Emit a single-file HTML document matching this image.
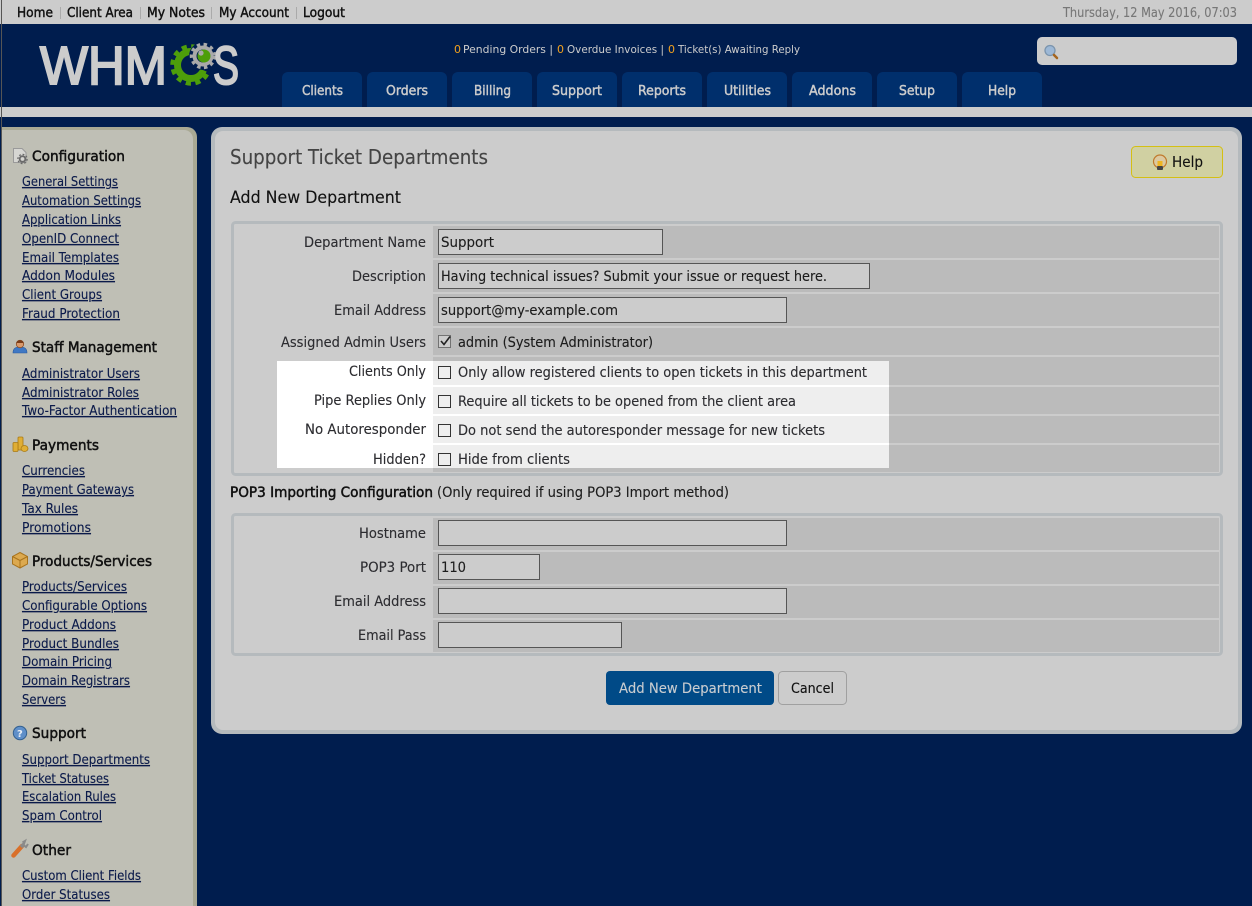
<!DOCTYPE html>
<html><head><meta charset="utf-8"><title>Support Ticket Departments</title>
<style>
html,body{margin:0;padding:0;background:#001d4e;overflow:hidden}
svg{display:block}
text{font-family:"DejaVu Sans","Liberation Sans",sans-serif;font-size:14px;fill:#2c2c30;stroke:#2c2c30;stroke-width:.12;white-space:pre}
.t{font-size:13.5px;fill:#111;stroke:#111;stroke-width:.45}
.tab{font-size:13px;fill:#ccc;stroke:#ccc;stroke-width:.45}
.st{font-size:11px;fill:#ccc;stroke:none}
.z{font-size:11px;fill:#f0a01e;stroke:none}
.h{font-size:14.5px;fill:#111;stroke:#111;stroke-width:.5}
.l{font-size:13px;fill:#0b1a4a;stroke:#0b1a4a;stroke-width:.12;text-decoration:underline}
.f{fill:#1c1c1c;stroke:#1c1c1c}
</style></head><body>
<svg width="1252" height="906" viewBox="0 0 1252 906" xmlns="http://www.w3.org/2000/svg">
<rect width="1252" height="906" fill="#001d4e"/>
<rect width="1252" height="24" fill="#ccc"/>
<rect y="107" width="1252" height="10" fill="#ccc"/>
<rect x="1" width="1" height="906" fill="#555"/>

<!-- top nav -->
<text class="t" x="17" y="17" textLength="36" lengthAdjust="spacingAndGlyphs">Home</text>
<text class="t" x="67" y="17" textLength="66" lengthAdjust="spacingAndGlyphs">Client Area</text>
<text class="t" x="147" y="17" textLength="58" lengthAdjust="spacingAndGlyphs">My Notes</text>
<text class="t" x="219" y="17" textLength="70" lengthAdjust="spacingAndGlyphs">My Account</text>
<text class="t" x="303" y="17" textLength="42" lengthAdjust="spacingAndGlyphs">Logout</text>
<g fill="#aaa"><rect x="60" y="7" width="1" height="12"/><rect x="140" y="7" width="1" height="12"/><rect x="211" y="7" width="1" height="12"/><rect x="296" y="7" width="1" height="12"/></g>
<text x="1063" y="17" textLength="174" lengthAdjust="spacingAndGlyphs" style="font-size:13px;fill:#777;stroke:#777">Thursday, 12 May 2016, 07:03</text>

<!-- logo -->
<text x="40" y="84" textLength="127" lengthAdjust="spacingAndGlyphs" style="font-family:'Liberation Sans',sans-serif;font-size:54px;fill:#ccc;stroke:#ccc;stroke-width:2">WHM</text>
<circle cx="191" cy="65" r="13.5" fill="none" stroke="#4d9e0a" stroke-width="7"/>
<circle cx="191" cy="65" r="18.5" fill="none" stroke="#4d9e0a" stroke-width="4.5" stroke-dasharray="5.2 4.5"/>
<path d="M191 65L222 58L222 78Z" fill="#001d4e"/>
<circle cx="203" cy="56" r="14" fill="#001d4e"/>
<circle cx="203" cy="56" r="8.5" fill="none" stroke="#a9a9a9" stroke-width="4"/>
<circle cx="203" cy="56" r="11.5" fill="none" stroke="#a9a9a9" stroke-width="3.5" stroke-dasharray="3.4 3.4"/>
<circle cx="204" cy="56" r="6.5" fill="#4d9e0a"/>
<circle cx="201" cy="53" r="2.6" fill="#a9a9a9"/>
<text x="213" y="84" textLength="26" lengthAdjust="spacingAndGlyphs" style="font-family:'Liberation Sans',sans-serif;font-size:54px;fill:#ccc;stroke:#ccc;stroke-width:2">S</text>

<!-- stats -->
<text class="z" x="454" y="53">0</text>
<text class="st" x="463" y="53" textLength="90" lengthAdjust="spacingAndGlyphs">Pending Orders |</text>
<text class="z" x="557" y="53">0</text>
<text class="st" x="567" y="53" textLength="97" lengthAdjust="spacingAndGlyphs">Overdue Invoices |</text>
<text class="z" x="668" y="53">0</text>
<text class="st" x="678" y="53" textLength="122" lengthAdjust="spacingAndGlyphs">Ticket(s) Awaiting Reply</text>

<!-- search -->
<rect x="1037" y="37" width="200" height="28" rx="5" fill="#ccc"/>
<circle cx="1050" cy="50.500" r="5" fill="#9db8d6" stroke="#7b94ad" stroke-width="1.300"/>
<path d="M1054 55L1057 58" stroke="#a5651f" stroke-width="2.500" stroke-linecap="round"/>

<!-- tabs -->
<g fill="#002f6c">
<path d="M282 107V78a6 6 0 0 1 6-6h68a6 6 0 0 1 6 6v29z"/>
<path d="M367 107V78a6 6 0 0 1 6-6h68a6 6 0 0 1 6 6v29z"/>
<path d="M452 107V78a6 6 0 0 1 6-6h68a6 6 0 0 1 6 6v29z"/>
<path d="M537 107V78a6 6 0 0 1 6-6h68a6 6 0 0 1 6 6v29z"/>
<path d="M622 107V78a6 6 0 0 1 6-6h68a6 6 0 0 1 6 6v29z"/>
<path d="M707 107V78a6 6 0 0 1 6-6h68a6 6 0 0 1 6 6v29z"/>
<path d="M792 107V78a6 6 0 0 1 6-6h68a6 6 0 0 1 6 6v29z"/>
<path d="M877 107V78a6 6 0 0 1 6-6h68a6 6 0 0 1 6 6v29z"/>
<path d="M962 107V78a6 6 0 0 1 6-6h68a6 6 0 0 1 6 6v29z"/>
</g>
<text class="tab" x="302" y="95" textLength="41" lengthAdjust="spacingAndGlyphs">Clients</text>
<text class="tab" x="386" y="95" textLength="42" lengthAdjust="spacingAndGlyphs">Orders</text>
<text class="tab" x="474" y="95" textLength="37" lengthAdjust="spacingAndGlyphs">Billing</text>
<text class="tab" x="552" y="95" textLength="50" lengthAdjust="spacingAndGlyphs">Support</text>
<text class="tab" x="638" y="95" textLength="48" lengthAdjust="spacingAndGlyphs">Reports</text>
<text class="tab" x="724" y="95" textLength="47" lengthAdjust="spacingAndGlyphs">Utilities</text>
<text class="tab" x="809" y="95" textLength="47" lengthAdjust="spacingAndGlyphs">Addons</text>
<text class="tab" x="899" y="95" textLength="36" lengthAdjust="spacingAndGlyphs">Setup</text>
<text class="tab" x="988" y="95" textLength="28" lengthAdjust="spacingAndGlyphs">Help</text>

<!-- sidebar -->
<path d="M2 906V127H187a10 10 0 0 1 10 10V906z" fill="#a9a994"/>
<path d="M2 906V130H184a9 9 0 0 1 9 9V906z" fill="#bfbfb5"/>

<text class="h" x="32" y="161" textLength="93" lengthAdjust="spacingAndGlyphs">Configuration</text>
<text class="h" x="32" y="352" textLength="125" lengthAdjust="spacingAndGlyphs">Staff Management</text>
<text class="h" x="32" y="450" textLength="67" lengthAdjust="spacingAndGlyphs">Payments</text>
<text class="h" x="32" y="566" textLength="120" lengthAdjust="spacingAndGlyphs">Products/Services</text>
<text class="h" x="32" y="738" textLength="54" lengthAdjust="spacingAndGlyphs">Support</text>
<text class="h" x="32" y="855" textLength="39" lengthAdjust="spacingAndGlyphs">Other</text>

<text class="l" x="22" y="186" textLength="96" lengthAdjust="spacingAndGlyphs">General Settings</text>
<text class="l" x="22" y="205" textLength="119" lengthAdjust="spacingAndGlyphs">Automation Settings</text>
<text class="l" x="22" y="224" textLength="99" lengthAdjust="spacingAndGlyphs">Application Links</text>
<text class="l" x="22" y="243" textLength="97" lengthAdjust="spacingAndGlyphs">OpenID Connect</text>
<text class="l" x="22" y="262" textLength="97" lengthAdjust="spacingAndGlyphs">Email Templates</text>
<text class="l" x="22" y="280" textLength="93" lengthAdjust="spacingAndGlyphs">Addon Modules</text>
<text class="l" x="22" y="299" textLength="80" lengthAdjust="spacingAndGlyphs">Client Groups</text>
<text class="l" x="22" y="318" textLength="98" lengthAdjust="spacingAndGlyphs">Fraud Protection</text>

<text class="l" x="22" y="378" textLength="118" lengthAdjust="spacingAndGlyphs">Administrator Users</text>
<text class="l" x="22" y="397" textLength="117" lengthAdjust="spacingAndGlyphs">Administrator Roles</text>
<text class="l" x="22" y="415" textLength="155" lengthAdjust="spacingAndGlyphs">Two-Factor Authentication</text>

<text class="l" x="22" y="475" textLength="63" lengthAdjust="spacingAndGlyphs">Currencies</text>
<text class="l" x="22" y="494" textLength="112" lengthAdjust="spacingAndGlyphs">Payment Gateways</text>
<text class="l" x="22" y="513" textLength="56" lengthAdjust="spacingAndGlyphs">Tax Rules</text>
<text class="l" x="22" y="532" textLength="69" lengthAdjust="spacingAndGlyphs">Promotions</text>

<text class="l" x="22" y="591" textLength="105" lengthAdjust="spacingAndGlyphs">Products/Services</text>
<text class="l" x="22" y="610" textLength="125" lengthAdjust="spacingAndGlyphs">Configurable Options</text>
<text class="l" x="22" y="629" textLength="94" lengthAdjust="spacingAndGlyphs">Product Addons</text>
<text class="l" x="22" y="648" textLength="97" lengthAdjust="spacingAndGlyphs">Product Bundles</text>
<text class="l" x="22" y="666" textLength="90" lengthAdjust="spacingAndGlyphs">Domain Pricing</text>
<text class="l" x="22" y="685" textLength="108" lengthAdjust="spacingAndGlyphs">Domain Registrars</text>
<text class="l" x="22" y="704" textLength="44" lengthAdjust="spacingAndGlyphs">Servers</text>

<text class="l" x="22" y="764" textLength="128" lengthAdjust="spacingAndGlyphs">Support Departments</text>
<text class="l" x="22" y="783" textLength="87" lengthAdjust="spacingAndGlyphs">Ticket Statuses</text>
<text class="l" x="22" y="801" textLength="94" lengthAdjust="spacingAndGlyphs">Escalation Rules</text>
<text class="l" x="22" y="820" textLength="80" lengthAdjust="spacingAndGlyphs">Spam Control</text>

<text class="l" x="22" y="880" textLength="119" lengthAdjust="spacingAndGlyphs">Custom Client Fields</text>
<text class="l" x="22" y="899" textLength="88" lengthAdjust="spacingAndGlyphs">Order Statuses</text>

<!-- sidebar icons -->
<path d="M13.500 148.500H22L26 152.500V162.500H13.500Z" fill="#d6d6d2" stroke="#9a9a9a"/>
<circle cx="22.500" cy="159" r="2.800" fill="none" stroke="#6a6a6a" stroke-width="1.800"/>
<circle cx="22.500" cy="159" r="4.600" fill="none" stroke="#6a6a6a" stroke-width="1.300" stroke-dasharray="1.800 1.800"/>

<path d="M13 353C13 348 16 347 20 347S27 348 27 353Z" fill="#3f78c4" stroke="#2a5a9e" stroke-width=".6"/>
<circle cx="20" cy="344" r="3.700" fill="#d99a6c" stroke="#8a4a22" stroke-width=".8"/>
<path d="M16.500 343C17 339.500 23 339.500 23.500 343Z" fill="#7a3c18"/>

<g fill="#e0ae35" stroke="#a87a14" stroke-width=".8">
<rect x="18" y="437" width="5" height="13" rx="1"/>
<rect x="13" y="442.500" width="5" height="9" rx="1"/>
<ellipse cx="24.500" cy="448.500" rx="3.500" ry="3"/>
</g>

<path d="M20 552.500L27.500 556.500V564L20 568L12.500 564V556.500Z" fill="#dca94f" stroke="#a9741e"/>
<path d="M12.500 556.500L20 560.500L27.500 556.500M20 560.500V568" fill="none" stroke="#a9741e"/>

<circle cx="20" cy="733" r="6.700" fill="#5f8fc9" stroke="#33608f" stroke-width="1"/>
<text x="17" y="737" style="font-size:10px;font-weight:bold;fill:#e8eef6;stroke:none">?</text>

<path d="M13.500 855.500L22 846" stroke="#d9702a" stroke-width="4.500" stroke-linecap="round"/>
<path d="M21 847L24 844" stroke="#8a8a8a" stroke-width="3.500"/>
<path d="M22.500 842.500L25 841L23.500 845L26 847L28 844" fill="none" stroke="#8a8a8a" stroke-width="2"/>

<!-- main panel -->
<rect x="211" y="127" width="1031" height="607" rx="11" fill="#b5babd"/>
<rect x="215" y="131" width="1023" height="599" rx="8" fill="#ccc"/>

<text x="230" y="164" textLength="258" lengthAdjust="spacingAndGlyphs" style="font-size:20px;fill:#444;stroke:#444">Support Ticket Departments</text>
<text x="230" y="203" textLength="171" lengthAdjust="spacingAndGlyphs" style="font-size:16.500px;fill:#111;stroke:#111">Add New Department</text>

<rect x="1131.500" y="146.500" width="91" height="31" rx="4" fill="#d0d0a2" stroke="#d4bf14"/>
<circle cx="1160" cy="161.500" r="6.500" fill="#dcc9a0" stroke="#c07a2c" stroke-width="1.200"/>
<rect x="1157.500" y="161" width="5" height="5" fill="#eeb522"/>
<rect x="1157" y="166" width="6" height="4" rx="1" fill="#444"/>
<text x="1172" y="167" textLength="31" lengthAdjust="spacingAndGlyphs" style="font-size:15px;fill:#111;stroke:#111">Help</text>

<!-- table 1 -->
<rect x="232.500" y="222.500" width="989" height="252" rx="3" fill="none" stroke="#b5babd" stroke-width="3"/>
<g fill="#bbb">
<rect x="433" y="226" width="786" height="32"/>
<rect x="433" y="260" width="786" height="32"/>
<rect x="433" y="294" width="786" height="32"/>
<rect x="433" y="328" width="786" height="27"/>
<rect x="433" y="357" width="786" height="28"/>
<rect x="433" y="387" width="786" height="27"/>
<rect x="433" y="416" width="786" height="27"/>
<rect x="433" y="445" width="786" height="27"/>
</g>
<!-- highlight -->
<rect x="277" y="361" width="612" height="107" fill="#fff"/>
<g fill="#eee">
<rect x="433" y="361" width="456" height="24"/>
<rect x="433" y="387" width="456" height="27"/>
<rect x="433" y="416" width="456" height="27"/>
<rect x="433" y="445" width="456" height="23"/>
</g>

<g fill="#ccc" stroke="#555">
<rect x="438.500" y="229.500" width="224" height="25"/>
<rect x="438.500" y="263.500" width="431" height="25"/>
<rect x="438.500" y="297.500" width="348" height="25"/>
</g>

<text x="304" y="247" textLength="122" lengthAdjust="spacingAndGlyphs">Department Name</text>
<text x="352" y="281" textLength="74" lengthAdjust="spacingAndGlyphs">Description</text>
<text x="334" y="315" textLength="92" lengthAdjust="spacingAndGlyphs">Email Address</text>
<text x="281" y="347" textLength="145" lengthAdjust="spacingAndGlyphs">Assigned Admin Users</text>
<text x="349" y="376" textLength="77" lengthAdjust="spacingAndGlyphs">Clients Only</text>
<text x="314" y="405" textLength="112" lengthAdjust="spacingAndGlyphs">Pipe Replies Only</text>
<text x="305" y="434" textLength="121" lengthAdjust="spacingAndGlyphs">No Autoresponder</text>
<text x="373" y="464" textLength="53" lengthAdjust="spacingAndGlyphs">Hidden?</text>

<text class="f" x="441" y="247" textLength="53" lengthAdjust="spacingAndGlyphs">Support</text>
<text class="f" x="441" y="281" textLength="386" lengthAdjust="spacingAndGlyphs">Having technical issues? Submit your issue or request here.</text>
<text class="f" x="441" y="315" textLength="177" lengthAdjust="spacingAndGlyphs">support@my-example.com</text>

<rect x="438.500" y="335.500" width="12" height="12" fill="#ccc" stroke="#222" stroke-dasharray="1 1" shape-rendering="crispEdges"/>
<path d="M441 341L444 344.500L450 336.500" fill="none" stroke="#222" stroke-width="1.600"/>
<text class="f" x="458" y="347" textLength="195" lengthAdjust="spacingAndGlyphs">admin (System Administrator)</text>

<g fill="#eee" stroke="#333">
<rect x="438.500" y="366.500" width="12" height="12"/>
<rect x="438.500" y="395.500" width="12" height="12"/>
<rect x="438.500" y="424.500" width="12" height="12"/>
<rect x="438.500" y="453.500" width="12" height="12"/>
</g>
<text x="458" y="377" textLength="409" lengthAdjust="spacingAndGlyphs">Only allow registered clients to open tickets in this department</text>
<text x="458" y="406" textLength="338" lengthAdjust="spacingAndGlyphs">Require all tickets to be opened from the client area</text>
<text x="458" y="435" textLength="367" lengthAdjust="spacingAndGlyphs">Do not send the autoresponder message for new tickets</text>
<text x="458" y="464" textLength="112" lengthAdjust="spacingAndGlyphs">Hide from clients</text>

<!-- POP3 -->
<text x="230" y="497" textLength="203" lengthAdjust="spacingAndGlyphs" style="fill:#111;stroke:#111;stroke-width:.5">POP3 Importing Configuration</text>
<text class="f" x="437" y="497" textLength="292" lengthAdjust="spacingAndGlyphs">(Only required if using POP3 Import method)</text>

<rect x="232.500" y="514.500" width="989" height="140" rx="3" fill="none" stroke="#b5babd" stroke-width="3"/>
<g fill="#bbb">
<rect x="433" y="518" width="786" height="32"/>
<rect x="433" y="552" width="786" height="32"/>
<rect x="433" y="586" width="786" height="32"/>
<rect x="433" y="620" width="786" height="32"/>
</g>
<g fill="#ccc" stroke="#555">
<rect x="438.500" y="520.500" width="348" height="25"/>
<rect x="438.500" y="554.500" width="101" height="25"/>
<rect x="438.500" y="588.500" width="348" height="25"/>
<rect x="438.500" y="622.500" width="183" height="25"/>
</g>
<text x="359" y="538" textLength="67" lengthAdjust="spacingAndGlyphs">Hostname</text>
<text x="360" y="572" textLength="66" lengthAdjust="spacingAndGlyphs">POP3 Port</text>
<text x="334" y="606" textLength="92" lengthAdjust="spacingAndGlyphs">Email Address</text>
<text x="358" y="640" textLength="68" lengthAdjust="spacingAndGlyphs">Email Pass</text>
<text class="f" x="441" y="572" textLength="25" lengthAdjust="spacingAndGlyphs">110</text>

<!-- buttons -->
<rect x="606" y="671" width="168" height="34" rx="4" fill="#004a87"/>
<text x="619" y="693" textLength="143" lengthAdjust="spacingAndGlyphs" style="fill:#c8ccd0;stroke:#c8ccd0">Add New Department</text>
<rect x="778.500" y="671.500" width="68" height="33" rx="4" fill="#ccc" stroke="#a0a0a0"/>
<text x="791" y="693" textLength="43" lengthAdjust="spacingAndGlyphs" style="fill:#111;stroke:#111">Cancel</text>
</svg>
</body></html>
